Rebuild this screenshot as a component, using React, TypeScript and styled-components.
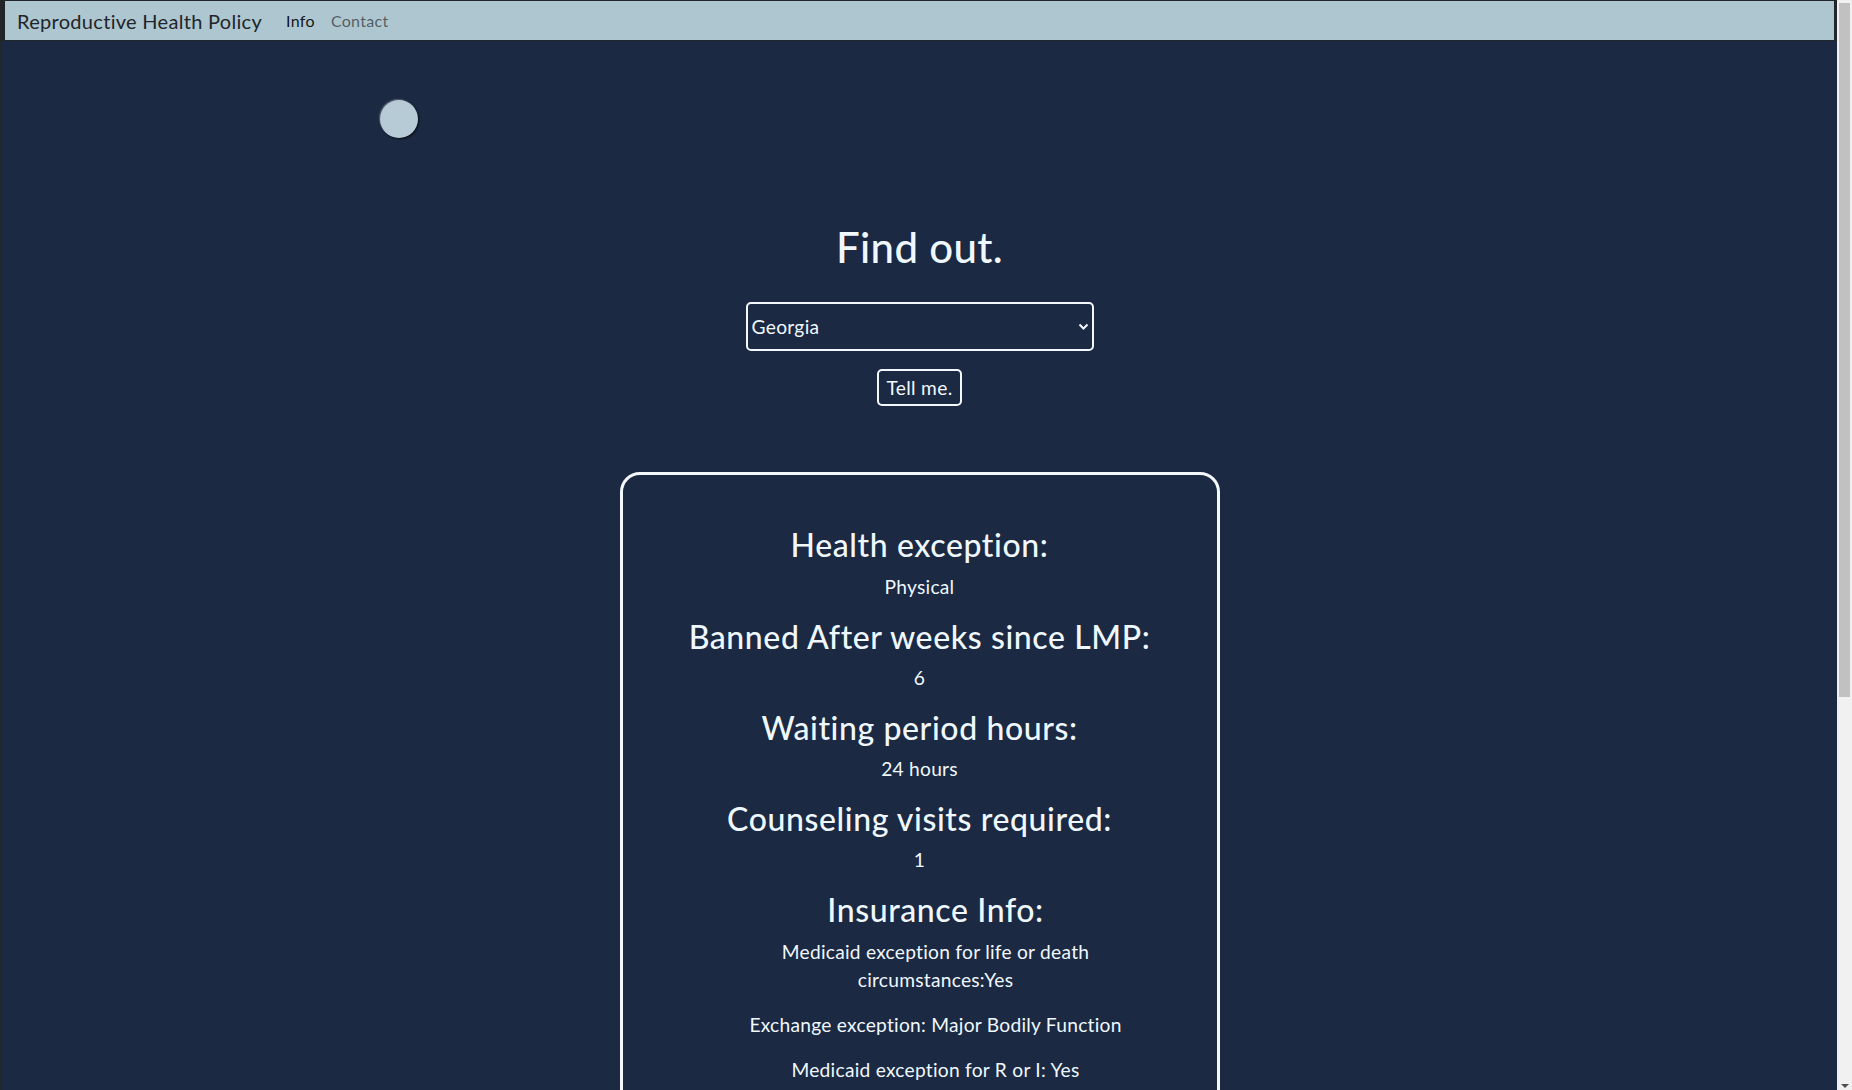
import React from "react";
import styled, { createGlobalStyle } from "styled-components";

const FONT = `"Lato", "Noto Sans", "Liberation Sans", sans-serif`;

const GlobalStyle = createGlobalStyle`
  html, body, #root {
    margin: 0;
    padding: 0;
    height: 100%;
    overflow: hidden;
    background: #1b2942;
  }
  body {
    font-family: ${FONT};
    color: #f0f8ff;
  }
  * { box-sizing: border-box; }
`;

const Shell = styled.div`
  display: flex;
  height: 100vh;
`;

const Page = styled.div`
  flex: 1;
  min-width: 0;
  overflow: hidden;
  border-left: 2px solid #23272c;
  background: #1b2942;
`;

const ScrollTrack = styled.div`
  display: flex;
  flex-direction: column;
  align-items: center;
  width: 15px;
  flex-shrink: 0;
  background: #f1f1f1;
  padding: 3px 2px 2px;
`;

const ScrollThumb = styled.div`
  width: 11px;
  height: 694px;
  background: #c1c1c1;
`;

const ScrollArrow = styled.div`
  margin-top: auto;
  width: 0;
  height: 0;
  border-left: 4px solid transparent;
  border-right: 4px solid transparent;
  border-top: 4px solid #505050;
`;

const HeaderStrip = styled.header`
  background: #212529;
  padding: 1px 3px 1px 3px;
`;

const Navbar = styled.nav`
  display: flex;
  align-items: center;
  height: 39px;
  padding: 0 12px;
  background: #adc6d0;
`;

const Brand = styled.a`
  font-size: 20px;
  letter-spacing: 0.3px;
  color: #212529;
  text-decoration: none;
  margin-right: 16px;
  line-height: 1;
`;

const NavLink = styled.a<{ $active?: boolean }>`
  font-size: 16px;
  letter-spacing: 0.3px;
  padding: 0 8px;
  text-decoration: none;
  color: ${(p) => (p.$active ? "rgba(0,0,0,0.9)" : "rgba(0,0,0,0.55)")};
`;

const Toggle = styled.button`
  display: block;
  width: 38px;
  height: 38px;
  margin: 59px 0 0 378px;
  padding: 0;
  border: none;
  border-radius: 50%;
  background: #b6cbd5;
  box-shadow: 1px 1px 2px rgba(0, 0, 0, 0.75), -1px -1px 1px rgba(255, 255, 255, 0.25);
`;

const Finder = styled.section`
  display: flex;
  flex-direction: column;
  align-items: center;
  margin-top: 84px;
`;

const Title = styled.h1`
  margin: 0;
  font-size: 42px;
  font-weight: 500;
  letter-spacing: 0.3px;
  line-height: 1.2;
  color: #f0f8ff;
`;

const SelectWrap = styled.div`
  position: relative;
  width: 348px;
  height: 49px;
  margin-top: 30px;
`;

const Select = styled.select`
  appearance: none;
  width: 100%;
  height: 100%;
  padding: 0 30px 0 4px;
  font-family: ${FONT};
  font-size: 19.2px;
  letter-spacing: 0.3px;
  color: #f0f8ff;
  background: #1b2942;
  border: 2px solid #f4f8fc;
  border-radius: 5px;
  outline: none;
`;

const Chevron = styled.svg`
  position: absolute;
  right: 5px;
  top: 20px;
  width: 11px;
  height: 9px;
  pointer-events: none;
`;

const Button = styled.button`
  margin-top: 18px;
  height: 37px;
  padding: 0 8px;
  font-family: ${FONT};
  font-size: 19.2px;
  letter-spacing: 0.3px;
  color: #f0f8ff;
  background: transparent;
  border: 2px solid #f4f8fc;
  border-radius: 5px;
`;

const Card = styled.article`
  width: 600px;
  margin: 66px auto 0;
  padding: 51px 48px 52px;
  border: 3px solid #f4f8fc;
  border-radius: 20px;
  text-align: center;
`;

const Heading = styled.h2`
  margin: 0 0 8px;
  font-size: 32px;
  font-weight: 500;
  letter-spacing: 0.6px;
  line-height: 1.2;
  color: #f0f8ff;
`;

const Value = styled.p`
  margin: 0 0 16px;
  font-size: 19.2px;
  letter-spacing: 0.25px;
  line-height: 1.5;
  color: #f0f8ff;
`;

const InsuranceList = styled.div`
  padding-left: 32px;
`;

const InsuranceItem = styled(Value)`
  max-width: 440px;
  margin-left: auto;
  margin-right: auto;
`;

const fields: { label: string; value: string }[] = [
  { label: "Health exception:", value: "Physical" },
  { label: "Banned After weeks since LMP:", value: "6" },
  { label: "Waiting period hours:", value: "24 hours" },
  { label: "Counseling visits required:", value: "1" },
];

const insurance = [
  "Medicaid exception for life or death circumstances:Yes",
  "Exchange exception: Major Bodily Function",
  "Medicaid exception for R or I: Yes",
];

export default function App() {
  return (
    <>
      <GlobalStyle />
      <Shell>
        <Page>
          <HeaderStrip>
            <Navbar>
              <Brand href="#">Reproductive Health Policy</Brand>
              <NavLink href="#" $active>
                Info
              </NavLink>
              <NavLink href="#">Contact</NavLink>
            </Navbar>
          </HeaderStrip>
          <Toggle aria-label="toggle theme" />
          <Finder>
            <Title>Find out.</Title>
            <SelectWrap>
              <Select defaultValue="Georgia">
                <option>Alabama</option>
                <option>Georgia</option>
                <option>Texas</option>
              </Select>
              <Chevron viewBox="0 0 11 9">
                <path d="M1.5 2.5 L5.5 6.5 L9.5 2.5" fill="none" stroke="#f0f8ff" strokeWidth="2" />
              </Chevron>
            </SelectWrap>
            <Button>Tell me.</Button>
          </Finder>
          <Card>
            {fields.map((f) => (
              <React.Fragment key={f.label}>
                <Heading>{f.label}</Heading>
                <Value>{f.value}</Value>
              </React.Fragment>
            ))}
            <InsuranceList>
              <Heading>Insurance Info:</Heading>
              {insurance.map((t) => (
                <InsuranceItem key={t}>{t}</InsuranceItem>
              ))}
            </InsuranceList>
          </Card>
        </Page>
        <ScrollTrack aria-hidden>
          <ScrollThumb />
          <ScrollArrow />
        </ScrollTrack>
      </Shell>
    </>
  );
}
